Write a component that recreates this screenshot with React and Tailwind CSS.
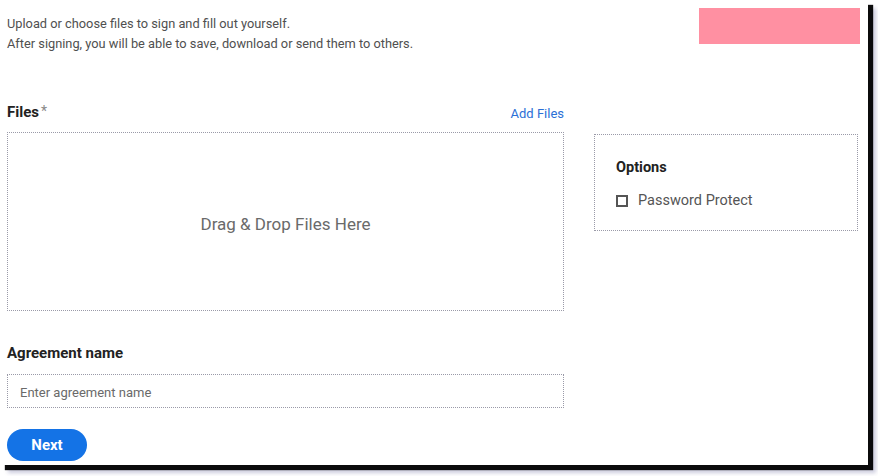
export default function App() {
  const font = { fontFamily: "Roboto, 'Noto Sans', sans-serif" };
  return (
    <div className="w-[878px] h-[476px] bg-white overflow-hidden" style={font}>
      <div className="relative w-[868px] h-[465px] bg-white shadow-[5px_5px_1px_rgba(0,0,0,0.95),8px_8px_4px_rgba(110,110,160,0.35)]">
        <div className="flex pl-[7px]">
          <div className="pt-[14px] w-[692px] text-[12.8px] leading-5 text-[#505050]">
            <p>Upload or choose files to sign and fill out yourself.</p>
            <p>After signing, you will be able to save, download or send them to others.</p>
          </div>
          <div className="mt-[8px] w-[161px] h-[36px] bg-[#ff90a2]" />
        </div>

        <div className="flex pl-[7px] mt-[46px]">
          <div className="w-[557px] flex flex-col">
            <div className="h-[24px] flex items-center justify-between">
              <div className="flex items-center">
                <span className="text-[15px] font-bold text-[#222]">Files</span>
                <span className="ml-[2px] text-[14px] text-[#888] leading-none -mt-[3px]">*</span>
              </div>
              <span className="text-[13px] text-[#2b6fd6] mt-[4px]">Add Files</span>
            </div>
            <div className="mt-[8px] h-[179px] border border-dotted border-[#9a9aa8] flex items-center justify-center pt-[7px]">
              <span className="text-[17px] text-[#6a6a6a]">Drag &amp; Drop Files Here</span>
            </div>
            <div className="mt-[32px] text-[15px] leading-5 font-bold text-[#222]">Agreement name</div>
            <div className="mt-[11px] h-[34px] border border-dotted border-[#9a9aa8] flex items-center pl-[12px] pt-[3px]">
              <span className="text-[13px] text-[#6a6a6a]">Enter agreement name</span>
            </div>
            <div className="mt-[21px]">
              <button className="w-[80px] h-[32px] rounded-full bg-[#1473e6] text-white text-[15px] font-bold pt-[1px]">Next</button>
            </div>
          </div>
          <div className="ml-[30px] pt-[2px]">
            <div className="w-[264px] h-[97px] border border-dotted border-[#9a9aa8] pl-[21px] pt-[23px] mt-[32px]">
              <div className="text-[14.5px] leading-5 font-bold text-[#222]">Options</div>
              <div className="mt-[12px] flex items-center">
                <span className="w-[12px] h-[12px] border-2 border-[#555] mr-[10px]" />
                <span className="text-[14.5px] text-[#555]">Password Protect</span>
              </div>
            </div>
          </div>
        </div>
      </div>
    </div>
  );
}
